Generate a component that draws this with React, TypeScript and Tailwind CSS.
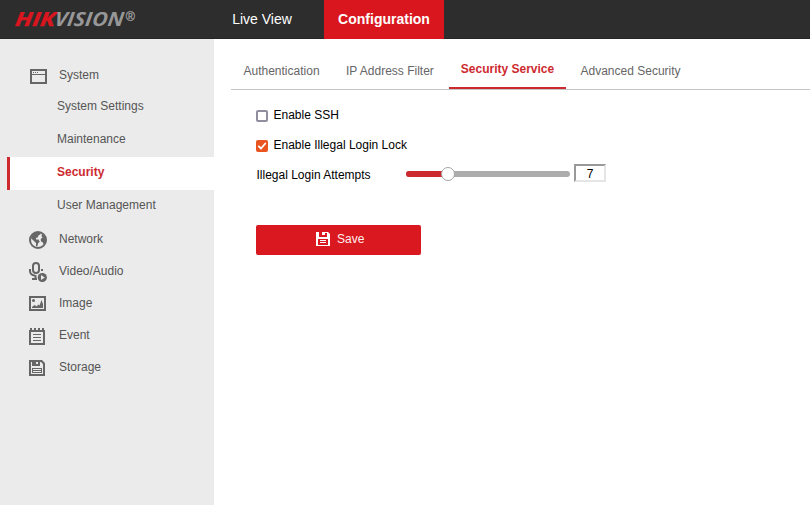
import React from "react";

function SystemIcon() {
  return (
    <svg width="17" height="15" viewBox="0 0 17 15" shapeRendering="crispEdges">
      <path fill="#666" fillRule="evenodd" d="M0 0h17v15H0zM2 2v3h13V2zM2 6v7h13V6z" />
      <path fill="#666" d="M3 3h1v1H3zM5 3h1v1H5zM7 3h1v1H7z" />
    </svg>
  );
}

function GlobeIcon() {
  return (
    <svg width="18" height="18" viewBox="0 0 18 18">
      <circle cx="9" cy="9" r="8" fill="none" stroke="#666" strokeWidth="2" />
      <path fill="#666" d="M7 1h5l-.6 2.300-2 1.200-.4 1.800-2 .8v1.400h2.500l1.200 2.300-1.700 1.800-.6 3L7 15V12L2 7.300l1.500-3.500z" />
      <path fill="#666" d="M13 3l3 2.500.8 3.500-1 4-1.200.5-.9-2.200-1.700-.9-.3-2.400 1.800-1.500-1-1.500z" />
    </svg>
  );
}

function MicIcon() {
  return (
    <svg width="19" height="20" viewBox="0 0 19 20">
      <rect x="4" y="1" width="6" height="10" rx="3" fill="none" stroke="#666" strokeWidth="2" />
      <path d="M1 7v2q0 4 5 4.500M6.500 13v4M3 17h5" fill="none" stroke="#666" strokeWidth="2" />
      <path d="M12 7h2v2h-2z" fill="#666" />
      <circle cx="13.300" cy="15.500" r="4.600" fill="#666" />
      <path d="M12 13v5l3.800-2.500z" fill="#ebebeb" />
    </svg>
  );
}

function ImageIcon() {
  return (
    <svg width="17" height="15" viewBox="0 0 17 15">
      <path fill="#666" fillRule="evenodd" d="M0 0h17v15H0zM2 2v11h13V2z" />
      <circle cx="4.500" cy="4.500" r="1.500" fill="#666" />
      <path fill="#666" d="M3 12v-1l2.500-2L8 10.500l1-2 1.500 1L12.500 4l1.500 4v4z" />
    </svg>
  );
}

function EventIcon() {
  return (
    <svg width="16" height="17" viewBox="0 0 16 17" shapeRendering="crispEdges">
      <path fill="#666" fillRule="evenodd" d="M0 2h16v15H0zM2 4v11h12V4z" />
      <path fill="#666" d="M1 0h2v3H1zM5 0h2v3H5zM9 0h2v3H9zM13 0h2v3h-2zM4 6h8v1H4zM4 9h8v1H4zM4 12h8v1H4z" />
    </svg>
  );
}

function StorageIcon() {
  return (
    <svg width="16" height="16" viewBox="0 0 16 16">
      <path fill="#666" fillRule="evenodd" d="M0 0h13l3 3v13H0zM2 2v12h12V4l-2-2z" />
      <path fill="#666" fillRule="evenodd" d="M3 2h4v2h2V2h2v4H3zM3 8h10v5H3zM4 9v1h8V9zM4 11v1h8v-1z" />
    </svg>
  );
}

function SaveIcon() {
  return (
    <svg width="14" height="14" viewBox="0 0 14 14">
      <path fill="#fff" fillRule="evenodd" d="M0 0h12l2 2v12H0zM3 0v5h8V1H9v2H6V0zM2 7v6h10V7z" />
      <path fill="#fff" d="M4 8h6v1H4zM4 10h6v1H4z" />
    </svg>
  );
}

function Section({ icon, label, offset = "pt-[9px]" }: { icon: React.ReactNode; label: string; offset?: string }) {
  return (
    <div className="flex h-8 items-center pl-[29px]">
      <span className={`flex h-8 w-[30px] shrink-0 items-start ${offset}`}>{icon}</span>
      <span className="leading-[14px]">{label}</span>
    </div>
  );
}

function SubItem({ label, active = false }: { label: string; active?: boolean }) {
  return (
    <div
      className={
        active
          ? "ml-[7px] flex h-[33px] items-start border-l-[3px] border-[#cd2a30] bg-white pt-2 pl-[47px] font-bold text-[#cd2a30]"
          : "flex h-[33px] items-start pt-2 pl-[57px]"
      }
    >
      {label}
    </div>
  );
}

export default function App() {
  return (
    <div className="flex h-[505px] w-[810px] flex-col overflow-hidden bg-white font-['Liberation_Sans',Arial,sans-serif] text-xs leading-[14px] text-[#555]">
      <header className="flex h-[39px] shrink-0 border-b border-[#272425] bg-[#2d2d2d]">
        <svg className="w-[200px] shrink-0" height="38" fontFamily="'Open Sans', sans-serif">
          <g fontSize="19.500" fontWeight="700" fontStyle="italic" transform="translate(0 26) skewX(-7)" strokeWidth="0.400">
            <text x="14.500" y="0" textLength="40" lengthAdjust="spacingAndGlyphs" fill="#d9161f" stroke="#d9161f">HIK</text>
            <text x="54" y="0" textLength="69" lengthAdjust="spacingAndGlyphs" fill="#979797">VISION</text>
          </g>
          <text x="125.800" y="21" fontSize="12.500" fill="#a8a8a8" stroke="#a8a8a8" strokeWidth="0.200" fontFamily="'Liberation Sans', sans-serif">®</text>
        </svg>
        <nav className="flex h-[39px] text-sm leading-[38px] text-white">
          <span className="w-[124px] text-center">Live View</span>
          <span className="w-[120px] bg-[#d9161d] text-center font-bold">Configuration</span>
        </nav>
      </header>
      <div className="flex grow">
        <aside className="w-[214px] shrink-0 bg-[#ebebeb] pt-5">
          <Section icon={<span className="ml-px"><SystemIcon /></span>} label="System" offset="pt-[10px]" />
          <SubItem label="System Settings" />
          <SubItem label="Maintenance" />
          <SubItem label="Security" active />
          <SubItem label="User Management" />
          <Section icon={<GlobeIcon />} label="Network" offset="pt-[8px]" />
          <Section icon={<MicIcon />} label="Video/Audio" offset="pt-[7px]" />
          <Section icon={<ImageIcon />} label="Image" />
          <Section icon={<EventIcon />} label="Event" />
          <Section icon={<StorageIcon />} label="Storage" />
        </aside>
        <main className="grow pl-[17px]">
          <div className="flex h-[51px] border-b border-[#c4c4c4] text-[#666]">
            <span className="w-[102px] pt-[25px] pl-[12.500px]">Authentication</span>
            <span className="w-[116px] pt-[25px] pl-[13px] whitespace-nowrap">IP Address Filter</span>
            <span className="w-[117px] border-b-2 border-[#cd2a30] pt-[23px] text-center font-bold whitespace-nowrap text-[#cd2a30]">Security Service</span>
            <span className="pt-[25px] pl-[14.500px]">Advanced Security</span>
          </div>
          <div className="pl-[25px] text-black">
            <div className="mt-[18px] flex h-[14px]">
              <span className="mt-[2px] mr-[5.500px] size-3 rounded-[2px] border-2 border-[#8f8f9d]" />
              <span>Enable SSH</span>
            </div>
            <div className="mt-4 flex h-[14px]">
              <span className="mt-[2px] mr-[5.500px] size-3 rounded-[2px] bg-[#e95420]">
                <svg width="12" height="12" fill="none" stroke="#fff" strokeWidth="1.800" strokeLinecap="round" strokeLinejoin="round"><path d="M2.800 6.300l2.200 2.200 4.300-5" /></svg>
              </span>
              <span>Enable Illegal Login Lock</span>
            </div>
            <div className="mt-3 flex h-[18px]">
              <span className="w-[150px] pt-[4px] pl-[0.500px]">Illegal Login Attempts</span>
              <svg className="shrink-0" width="164" height="18">
                <rect y="7" width="164" height="6" rx="3" fill="#adadad" />
                <path d="M3 7h39v6H3a3 3 0 0 1 0-6" fill="#cd2a30" />
                <circle cx="42" cy="10" r="6.500" fill="#fff" stroke="#a5a5a5" />
              </svg>
              <span className="ml-1 w-8 border-2 border-t-[#999] border-r-[#e5e5e5] border-b-[#e5e5e5] border-l-[#999] text-center leading-[16px]">7</span>
            </div>
            <button className="mt-[43px] flex h-[30px] w-[165px] rounded-[2px] bg-[#d9181f] pl-[60px] text-[#fff0f0]">
              <span className="mt-[7px] mr-[7px]"><SaveIcon /></span>
              <span className="pt-[7px]">Save</span>
            </button>
          </div>
        </main>
      </div>
    </div>
  );
}
